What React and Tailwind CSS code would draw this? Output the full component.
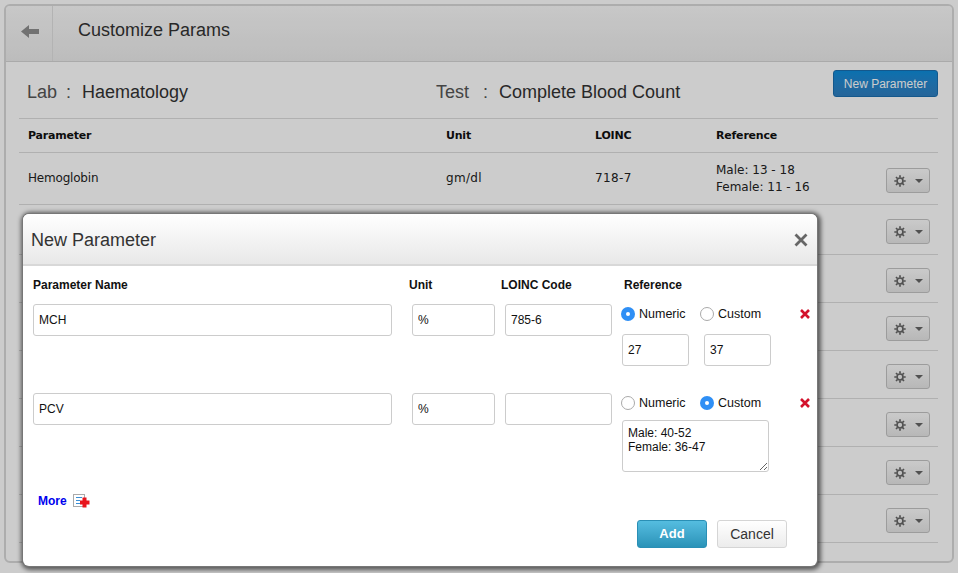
const UI = { fontFamily: '"Liberation Sans", Arial, sans-serif' };
const TABLE = { fontFamily: '"DejaVu Sans", Verdana, sans-serif' };

function GearIcon() {
  return (
    <svg width="12" height="12" viewBox="0 0 12 12" fill="none" stroke="#666">
      <circle cx="6" cy="6" r="3" strokeWidth="1.7" />
      <path
        d="M6 0.3 V2.5 M6 9.5 V11.7 M0.3 6 H2.5 M9.5 6 H11.7 M2 2 L3.5 3.5 M8.5 8.5 L10 10 M10 2 L8.5 3.5 M3.5 8.5 L2 10"
        strokeWidth="1.7"
      />
    </svg>
  );
}

function GearButton() {
  return (
    <button className="mt-[4px] flex h-[25px] w-[44px] items-center justify-center gap-[9px] rounded-[3px] border border-[#c4c4c4] bg-gradient-to-b from-[#fdfdfd] to-[#e6e6e6]">
      <GearIcon />
      <span className="h-0 w-0 border-x-[4px] border-t-[4px] border-x-transparent border-t-[#666]" />
    </button>
  );
}

function Row({ name, unit, loinc, ref1, ref2, className }) {
  return (
    <div className={`flex items-center border-b border-[#dcdcdc] text-xs text-[#222] ${className}`} style={TABLE}>
      <div className="-mt-[1px] w-[427px] pl-[9px] tracking-[-0.2px]">{name}</div>
      <div className="-mt-[1px] w-[149px] tracking-[0.3px]">{unit}</div>
      <div className="-mt-[1px] w-[121px] tracking-[0.4px]">{loinc}</div>
      <div className="w-[170px] leading-[17px]">
        {ref1}
        <br />
        {ref2}
      </div>
      <GearButton />
    </div>
  );
}

function Radio({ label, checked, className }) {
  return (
    <label className={`flex items-center gap-[4px] text-[12.5px] text-[#111] ${className}`}>
      {checked ? (
        <span className="flex h-[14px] w-[14px] items-center justify-center rounded-full bg-[#2f8ff5]">
          <span className="h-[4px] w-[4px] rounded-full bg-white" />
        </span>
      ) : (
        <span className="h-[14px] w-[14px] rounded-full border border-[#aaa] bg-white" />
      )}
      {label}
    </label>
  );
}

function TextInput({ value, className }) {
  return (
    <input
      readOnly
      value={value}
      className={`h-[32px] shrink-0 rounded-[3px] border border-[#ccc] bg-white px-[5px] text-xs text-[#111] outline-none ${className}`}
      style={UI}
    />
  );
}

function RedX() {
  return (
    <svg width="10" height="10" viewBox="0 0 10 10" className="ml-[15px]">
      <path d="M1 1 L9 9 M9 1 L1 9" stroke="#d3122c" strokeWidth="2.6" />
    </svg>
  );
}

function ParamRow({ name, unit, loinc, numeric, children }) {
  return (
    <div className="flex h-[89px] items-start">
      <TextInput value={name} className="w-[359px]" />
      <TextInput value={unit} className="ml-[20px] w-[83px]" />
      <TextInput value={loinc} className="ml-[10px] w-[107px]" />
      <div className="ml-[9px] w-[190px] shrink-0">
        <div className="flex h-[19px] items-center pt-[1px]">
          <Radio label="Numeric" checked={numeric} className="w-[79px]" />
          <Radio label="Custom" checked={!numeric} className="w-[85px]" />
          <RedX />
        </div>
        {children}
      </div>
    </div>
  );
}

export default function App() {
  return (
    <div className="relative h-[573px] w-[958px] overflow-hidden bg-white" style={UI}>
      <div className="ml-[4px] mt-[4px] h-[559px] w-[950px] overflow-hidden rounded-[6px] border-2 border-[#d9d9d9] bg-white">
        <div className="flex h-[56px] items-stretch border-b border-[#d5d5d5] bg-gradient-to-b from-[#fafafa] to-[#ececec]">
          <div className="flex w-[47px] items-center justify-center border-r border-[#e0e0e0] pb-[4px] pl-[2px]">
            <svg width="18" height="13" viewBox="0 0 18 13">
              <path d="M0 6.5 L8 0 V4 H18 V9 H8 V13 Z" fill="#8f8f8f" />
            </svg>
          </div>
          <div className="pl-[25px] pt-[13px] text-lg leading-[22px] text-[#333]">Customize Params</div>
        </div>

        <div className="pl-[13px] pr-[14px]">
          <div className="flex h-[56px] items-start">
            <div className="flex w-[417px] pl-[8px] pt-[19px] text-lg leading-[22px] text-[#333]">
              <span className="text-[#555]">Lab</span>
              <span className="ml-[9px] text-[#555]">:</span>
              <span className="ml-[11px]">Haematology</span>
            </div>
            <div className="flex flex-1 pt-[19px] text-lg leading-[22px] text-[#333]">
              <span className="text-[#555]">Test</span>
              <span className="ml-[14px] text-[#555]">:</span>
              <span className="ml-[11px]">Complete Blood Count</span>
            </div>
            <button className="mt-[8px] h-[27px] w-[105px] rounded-[3px] border border-[#1a6fb0] bg-gradient-to-b from-[#0d8ddb] to-[#2f7fc0] text-xs text-white">
              New Parameter
            </button>
          </div>
          <div className="flex h-[35px] items-center border-y border-[#dcdcdc] pt-[2px] text-[11px] font-bold tracking-[-0.2px] text-[#111]" style={TABLE}>
            <div className="w-[427px] pl-[9px]">Parameter</div>
            <div className="w-[149px]">Unit</div>
            <div className="w-[121px]">LOINC</div>
            <div>Reference</div>
          </div>
          <Row name="Hemoglobin" unit="gm/dl" loinc="718-7" ref1="Male: 13 - 18" ref2="Female: 11 - 16" className="h-[52px]" />
          <Row className="h-[50px]" />
          <Row className="h-[48px]" />
          <Row className="h-[48px]" />
          <Row className="h-[48px]" />
          <Row className="h-[48px]" />
          <Row className="h-[48px]" />
          <Row className="h-[48px]" />
        </div>
      </div>

      <div className="absolute inset-0 bg-black/20" />

      <div className="absolute left-[23px] top-[214px] h-[352px] w-[794px] rounded-[6px] bg-white shadow-[0_0_0_1px_#777,1px_1px_4px_3px_rgba(0,0,0,0.55)]">
        <div className="flex h-[52px] items-center justify-between rounded-t-[6px] border-b-2 border-[#d8d8d8] bg-gradient-to-b from-[#ffffff] to-[#e8e8e8] pl-[8px] pr-[9px] pt-[2px]">
          <span className="text-lg text-[#333]">New Parameter</span>
          <svg width="14" height="14" viewBox="0 0 14 14">
            <path d="M1.5 1.5 L12.5 12.5 M12.5 1.5 L1.5 12.5" stroke="#666" strokeWidth="2.8" />
          </svg>
        </div>

        <div className="px-[10px]">
          <div className="flex h-[38px] items-center text-xs font-bold text-[#111]">
            <div className="w-[376px]">Parameter Name</div>
            <div className="w-[92px]">Unit</div>
            <div className="w-[123px]">LOINC Code</div>
            <div>Reference</div>
          </div>

          <ParamRow name="MCH" unit="%" loinc="785-6" numeric>
            <div className="ml-[1px] mt-[11px] flex gap-[15px]">
              <TextInput value="27" className="w-[67px]" />
              <TextInput value="37" className="w-[67px]" />
            </div>
          </ParamRow>

          <ParamRow name="PCV" unit="%" loinc="">
            <textarea
              readOnly
              value={'Male: 40-52\nFemale: 36-47'}
              className="ml-[1px] mt-[8px] h-[52px] w-[147px] rounded-[3px] border border-[#ccc] px-[5px] py-[5px] text-xs leading-[14px] text-[#111] outline-none"
              style={UI}
            />
          </ParamRow>

          <div className="mt-[11px] flex items-center pl-[5px] text-xs font-bold text-[#0000ee]">
            <span>More</span>
            <svg width="17" height="14" viewBox="0 0 17 14" className="ml-[6px]">
              <rect x="0.5" y="0.5" width="11" height="12" fill="#fff" stroke="#aaa" />
              <path d="M3 3.5 H9 M3 6.5 H7 M3 9.5 H7" stroke="#3b8fd6" strokeWidth="1.2" />
              <path d="M9.5 3.5 H13.5 V6.5 H16.5 V10.5 H13.5 V13.5 H9.5 V10.5 H7 V6.5 H9.5 Z" fill="#e8141c" />
            </svg>
          </div>

          <div className="mt-[11px] flex justify-end gap-[10px] pr-[20px]">
            <button className="h-[28px] w-[70px] rounded-[3px] border border-[#2a8fb5] bg-gradient-to-b from-[#55bde0] to-[#2a93b8] text-[13px] font-bold text-white">
              Add
            </button>
            <button className="h-[28px] w-[70px] rounded-[3px] border border-[#d5d5d5] bg-gradient-to-b from-[#ffffff] to-[#ececec] text-sm text-[#333]">
              Cancel
            </button>
          </div>
        </div>
      </div>
    </div>
  );
}
